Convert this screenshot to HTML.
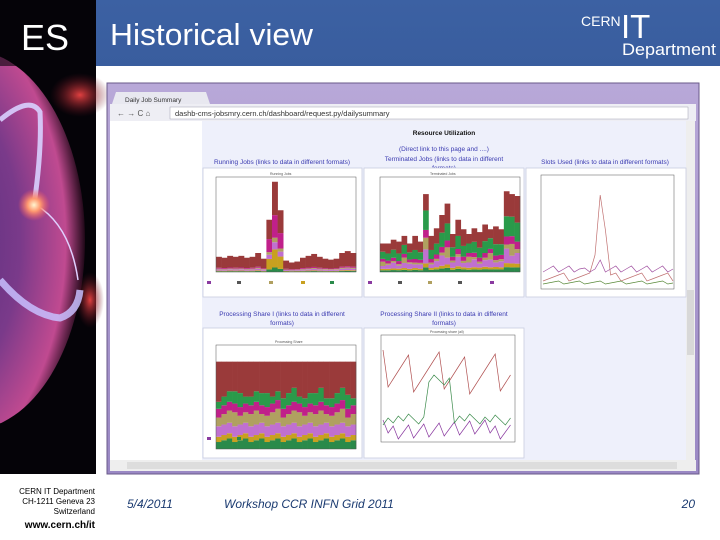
<!DOCTYPE html>
<html><head><meta charset="utf-8"><style>
*{margin:0;padding:0}
body{width:720px;height:540px;overflow:hidden;background:#fff;font-family:"Liberation Sans",sans-serif;position:relative}
.abs{position:absolute}
</style></head><body>
<svg class="abs" style="left:0;top:0" width="720" height="540" id="s">
<defs>
<radialGradient id="glob" cx="0.3" cy="0.5" r="0.7">
<stop offset="0" stop-color="#4a2a7a"/><stop offset="0.6" stop-color="#7a3a8a"/><stop offset="0.88" stop-color="#c04a90"/><stop offset="1" stop-color="#200818"/>
</radialGradient>
<radialGradient id="core" cx="0.5" cy="0.5" r="0.5">
<stop offset="0" stop-color="#fff6d0"/><stop offset="0.4" stop-color="#ff9a70"/><stop offset="1" stop-color="#ff5a60" stop-opacity="0"/>
</radialGradient>
<radialGradient id="red" cx="0.5" cy="0.5" r="0.5">
<stop offset="0" stop-color="#e04040"/><stop offset="1" stop-color="#601020" stop-opacity="0"/>
</radialGradient>
<linearGradient id="hdr" x1="0" y1="0" x2="0" y2="1"><stop offset="0" stop-color="#3c61a3"/><stop offset="1" stop-color="#395d9e"/></linearGradient>
<linearGradient id="win" x1="0" y1="0" x2="0" y2="1"><stop offset="0" stop-color="#b8a8d8"/><stop offset="1" stop-color="#9a88c4"/></linearGradient>
</defs>
<rect x="0" y="0" width="96" height="474" fill="#050308"/>
<ellipse cx="-30" cy="240" rx="115" ry="190" fill="url(#glob)"/>
<ellipse cx="80" cy="95" rx="30" ry="22" fill="url(#red)"/>
<ellipse cx="90" cy="300" rx="14" ry="28" fill="url(#red)"/>
<path d="M0 120 Q30 95 40 112 Q42 150 34 205" stroke="#d8d0ff" stroke-width="5" fill="none" opacity="0.9"/>
<path d="M0 280 Q30 315 60 318 Q78 312 80 290" stroke="#c8c0ff" stroke-width="7" fill="none" opacity="0.85"/>
<path d="M36 205 Q70 225 78 280" stroke="#e0d0ff" stroke-width="1.5" fill="none"/>
<circle cx="34" cy="205" r="16" fill="url(#core)"/>
<rect x="96" y="0" width="624" height="66" fill="url(#hdr)"/>
<rect x="0" y="0" width="96" height="66" fill="#050308" opacity="0.6"/>
<text x="21" y="50" font-size="36" fill="#fff">ES</text>
<text x="110" y="45" font-size="31" fill="#fff" textLength="203" lengthAdjust="spacingAndGlyphs">Historical view</text>
<text x="581" y="26" font-size="14" fill="#fff">CERN</text>
<text x="621" y="38" font-size="33" fill="#fff">IT</text>
<text x="622" y="55" font-size="17" fill="#fff" textLength="94" lengthAdjust="spacingAndGlyphs">Department</text>
<rect x="107" y="83" width="592" height="391" fill="url(#win)" stroke="#6a5a8a"/>
<path d="M112 104 L116 92 L206 92 L210 104 Z" fill="#e8e8f0"/>
<text x="125" y="102" font-size="6.5" fill="#333">Daily Job Summary</text>
<rect x="110" y="104" width="586" height="17" fill="#eeeef4"/>
<rect x="170" y="107" width="518" height="12" fill="#fff" stroke="#a0a0b0" stroke-width="0.5"/>
<text x="117" y="116" font-size="8" fill="#555">← → C ⌂</text>
<text x="175" y="116" font-size="7.5" fill="#333">dashb-cms-jobsmry.cern.ch/dashboard/request.py/dailysummary</text>
<rect x="110" y="121" width="576" height="339" fill="#fff"/>
<rect x="686" y="121" width="9" height="339" fill="#eee"/>
<rect x="687" y="290" width="7" height="65" fill="#d8d8d8"/>
<rect x="110" y="460" width="586" height="11" fill="#eee"/>
<rect x="127" y="462" width="550" height="7" fill="#ddd"/>
<rect x="202" y="121" width="484" height="339" fill="#eef0fb"/>
<g font-size="6.5" fill="#3a3ab0" text-anchor="middle">
<text x="444" y="135" fill="#111" font-weight="bold">Resource Utilization</text>
<text x="444" y="151">(Direct link to this page and ....)</text>
<text x="282" y="164">Running Jobs (links to data in different formats)</text>
<text x="444" y="161">Terminated Jobs (links to data in different</text>
<text x="444" y="170">formats)</text>
<text x="605" y="164">Slots Used (links to data in different formats)</text>
<text x="282" y="316">Processing Share I (links to data in different</text>
<text x="282" y="325">formats)</text>
<text x="444" y="316">Processing Share II (links to data in different</text>
<text x="444" y="325">formats)</text>
</g>
<g fill="#fff" stroke="#c8cce0" stroke-width="0.8">
<rect x="203" y="168" width="159" height="129"/>
<rect x="364" y="168" width="160" height="129"/>
<rect x="526" y="168" width="160" height="129"/>
<rect x="203" y="328" width="159" height="130"/>
<rect x="364" y="328" width="160" height="130"/>
</g>
<g id="charts"></g>
<g fill="none" stroke="#555" stroke-width="0.5">
<rect x="216" y="177" width="140" height="95"/>
<rect x="380" y="177" width="140" height="95"/>
<rect x="541" y="175" width="133" height="114"/>
<rect x="216" y="345" width="140" height="104"/>
<rect x="381" y="335" width="134" height="107"/>
</g>
<g font-size="3.5" fill="#555">
<text x="270" y="175">Running Jobs</text><text x="430" y="175">Terminated Jobs</text>
<text x="275" y="343">Processing Share</text><text x="430" y="333">Processing share (all)</text>
</g>
<g fill="#8a3aa0">
<rect x="207" y="281" width="4" height="3"/><rect x="237" y="281" width="4" height="3" fill="#555"/><rect x="269" y="281" width="4" height="3" fill="#b0a060"/><rect x="301" y="281" width="4" height="3" fill="#c8a020"/><rect x="330" y="281" width="4" height="3" fill="#2a8a4a"/>
<rect x="368" y="281" width="4" height="3"/><rect x="398" y="281" width="4" height="3" fill="#555"/><rect x="428" y="281" width="4" height="3" fill="#b0a060"/><rect x="458" y="281" width="4" height="3" fill="#555"/><rect x="490" y="281" width="4" height="3"/>
<rect x="207" y="437" width="4" height="3"/><rect x="237" y="437" width="4" height="3" fill="#2a8a4a"/><rect x="269" y="437" width="4" height="3" fill="#c8a020"/>
</g>
<text x="95" y="494" font-size="8" fill="#000" text-anchor="end">CERN IT Department</text>
<text x="95" y="504" font-size="8" fill="#000" text-anchor="end">CH-1211 Geneva 23</text>
<text x="95" y="514" font-size="8" fill="#000" text-anchor="end">Switzerland</text>
<text x="95" y="528" font-size="10" font-weight="bold" fill="#000" text-anchor="end">www.cern.ch/it</text>
<text x="127" y="508" font-size="12" font-style="italic" fill="#1a3a70">5/4/2011</text>
<text x="224" y="508" font-size="12" font-style="italic" fill="#1a3a70">Workshop CCR INFN Grid 2011</text>
<text x="695" y="508" font-size="12" font-style="italic" fill="#1a3a70" text-anchor="end">20</text>
</svg>
<script>
var g=document.getElementById('charts'),ns='http://www.w3.org/2000/svg';
function r(x,y,w,h,f){var e=document.createElementNS(ns,'rect');e.setAttribute('x',x);e.setAttribute('y',y);e.setAttribute('width',w);e.setAttribute('height',h);e.setAttribute('fill',f);g.appendChild(e);}
function l(pts,c){var e=document.createElementNS(ns,'polyline');e.setAttribute('points',pts.join(' '));e.setAttribute('stroke',c);e.setAttribute('fill','none');e.setAttribute('stroke-width','0.7');g.appendChild(e);}
var cols=['#2a8a4a','#c8a020','#c070d0','#b0a060','#c0208a','#2a9a4a','#9a3a3a'];
function bars(x0,y0,w,h,vals,frac){var n=vals.length,bw=w/n;
 for(var i=0;i<n;i++){var tot=vals[i]*h,y=y0;
  for(var k=0;k<frac.length;k++){var hh=tot*frac[k](i);r(x0+i*bw,y-hh,bw+0.3,hh,cols[k]);y-=hh;}
  r(x0+i*bw,y0-tot,bw+0.3,tot-(y0-y),'#9a3a3a');}
}
var v1=[.16,.15,.17,.16,.17,.15,.16,.2,.14,.55,.95,.65,.12,.1,.11,.15,.17,.19,.16,.14,.13,.14,.2,.22,.2];
bars(216,272,140,95,v1,[function(){return .05},function(i){return i>8&&i<12?.2:.04},function(){return .08},function(){return .05},function(i){return i>8&&i<12?.25:.06}]);
var v2=[.3,.3,.34,.32,.38,.3,.38,.32,.82,.38,.46,.6,.72,.4,.55,.45,.4,.46,.42,.5,.45,.48,.45,.85,.82,.8];
bars(380,272,140,95,v2,[function(){return .06},function(){return .05},function(i){return .1+(i%3)*.04},function(i){return i%4==0?.15:.05},function(){return .1},function(){return .25}]);
var v3=[];for(var i=0;i<26;i++)v3.push(.84);
bars(216,449,140,104,v3,[function(i){return .08+(i%3)*.02},function(){return .06},function(){return .12},function(i){return .1+(i%4)*.02},function(){return .1},function(i){return .08+(i%5)*.02}]);
var p=[],q=[];for(var i=0;i<26;i++){var x=543+i*5.2;p.push(x+','+(i==11?195:i==12?230:(i==10?255:(281-(i%5)*2))));q.push(x+','+(i==8?268:i==11?260:(272-(i%3)*3)));}
l(p,'#c07070');l(q,'#a050a0');
var z=[];for(var i=0;i<26;i++)z.push((543+i*5.2)+','+(284-(i%4)));l(z,'#5a8a3a');
var a=[],b=[],c=[];for(var i=0;i<26;i++){var x=383+i*5.1;a.push(x+','+(350+((i*37)%45)));b.push(x+','+(420+((i*13)%20)));c.push(x+','+(425-((i*7)%12)-(i>8&&i<14?40:0)));}
l(a,'#b05050');l(b,'#8a3aa0');l(c,'#3a8a4a');
</script>
</body></html>
